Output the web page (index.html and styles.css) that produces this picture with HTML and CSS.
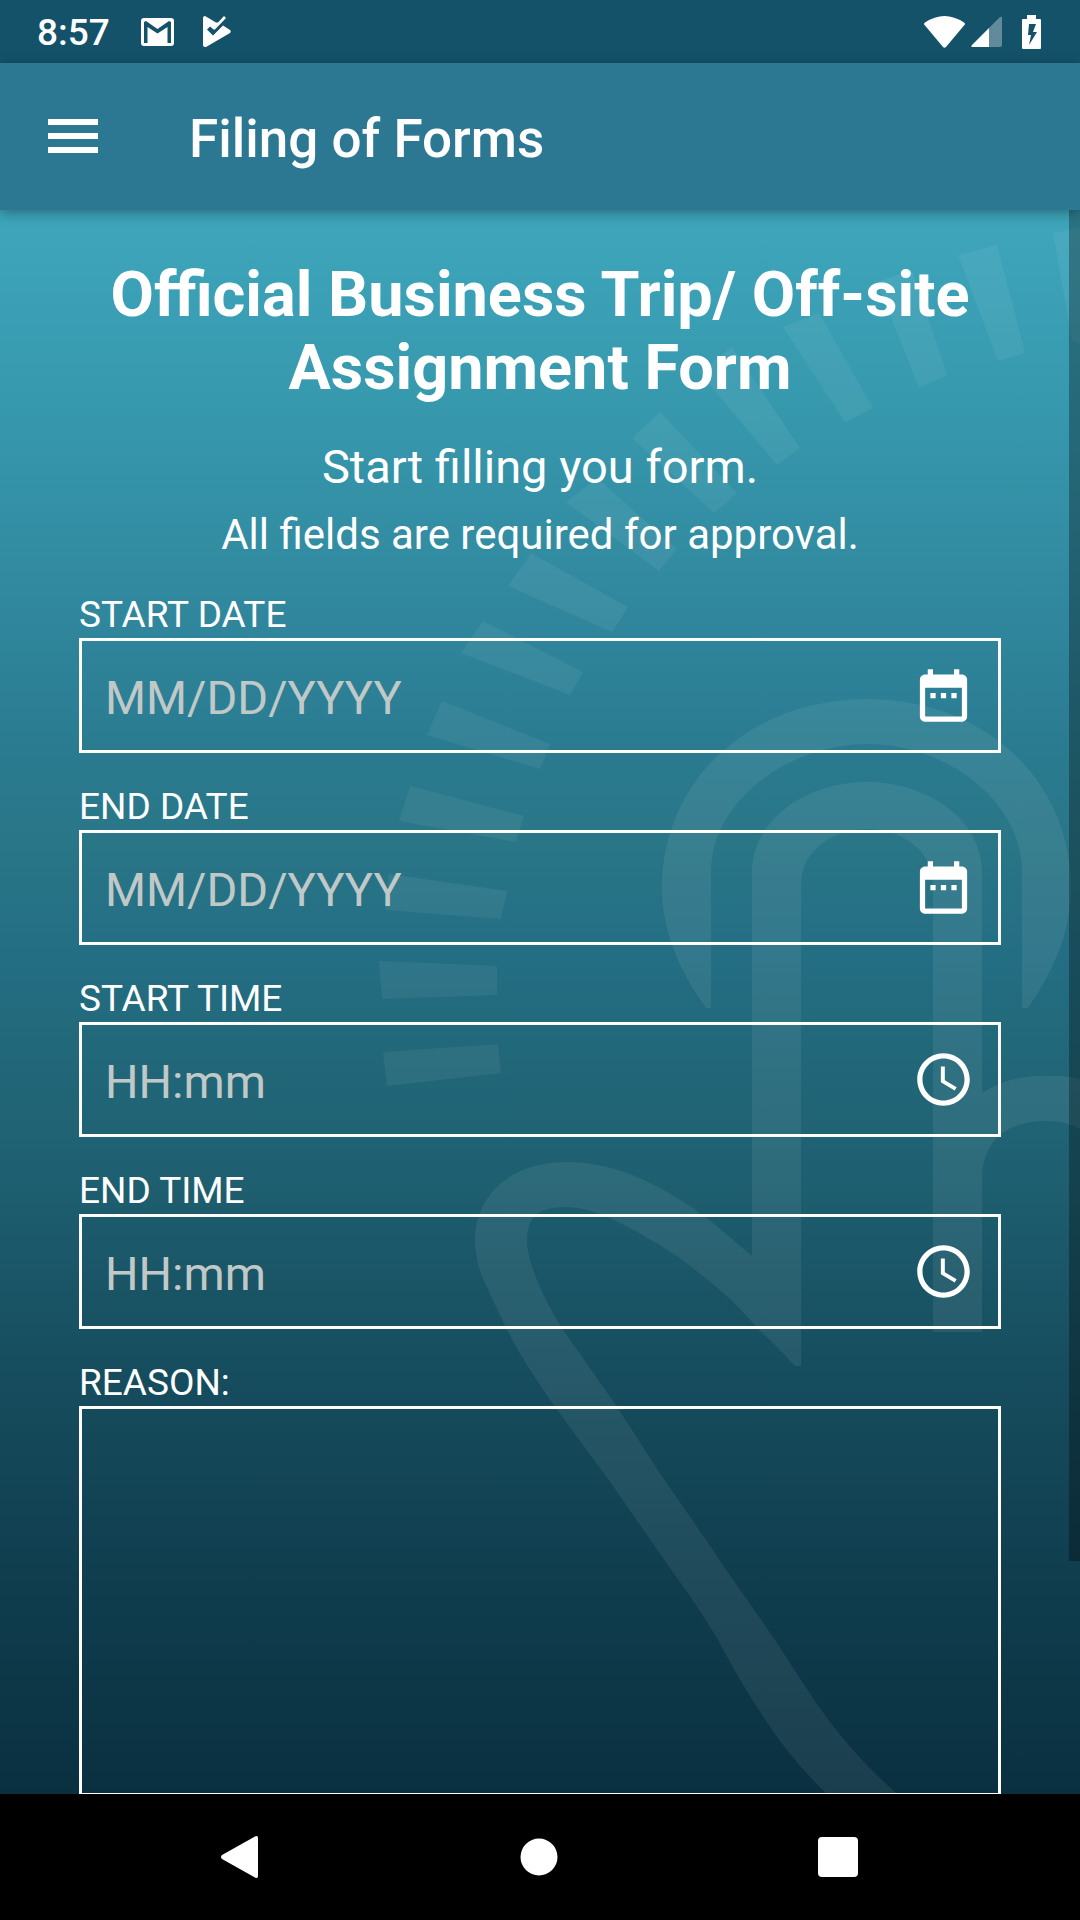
FILE: index.html
```html
<!DOCTYPE html>
<html lang="en">
<head>
<meta charset="utf-8">
<meta name="viewport" content="width=device-width, initial-scale=1">
<title>Filing of Forms</title>
<link rel="stylesheet" href="styles.css">
</head>
<body>
<div class="app">
  <div class="status">
    <span class="time">8:57</span>
    <svg class="mail" width="33" height="28" viewBox="0 0 33 28" aria-hidden="true">
      <path fill="#fff" fill-rule="evenodd" d="M3 0H30Q33 0 33 3V25Q33 28 30 28H3Q0 28 0 25V3Q0 0 3 0ZM3 4V25H6.500V9L16.500 15.500L26.500 9V25H30V4L28 3L16.500 11L5 3Z"/>
    </svg>
    <svg class="play" width="28" height="31" viewBox="0 0 28 31" aria-hidden="true">
      <path fill="#fff" d="M0 2Q0 0 2 0L13 6.500L15 6.500L21 0L23 2L12 13.500L10.500 13.500L7 10.500L4 13.500L10 19.500L20 9.500L27 14Q28.500 15.500 27 17L3 31Q0 31 0 29Z"/>
    </svg>
    <span class="spacer"></span>
    <svg class="wifi" width="41" height="32" viewBox="0 0 41 32" aria-hidden="true">
      <path fill="#fff" d="M1 9.500Q-1 8 1 6.500Q20.500-6.500 40 6.500Q42 8 40 9.500L22 31Q20.500 32.500 19 31Z"/>
    </svg>
    <svg class="signal" width="31" height="31" viewBox="0 0 31 31" aria-hidden="true">
      <path fill="#fff" fill-opacity=".33" d="M18 12L29 1Q31 0 31 2V29Q31 31 29 31H18Z"/>
      <path fill="#fff" d="M18 12V31H2Q-1 31 1 29Z"/>
    </svg>
    <svg class="battery" width="19" height="34" viewBox="0 0 19 34" aria-hidden="true">
      <path fill="#fff" fill-rule="evenodd" d="M5 0H14V4H18Q19 4 19 5V33Q19 34 18 34H1Q0 34 0 33V5Q0 4 1 4H5ZM7 9L6 20H9L7 30L15 17H11L14 9Z"/>
    </svg>
  </div>

  <header class="bar">
    <button class="menu" type="button" aria-label="Menu">
      <svg width="50" height="34" viewBox="0 0 50 34" aria-hidden="true"><path fill="#fff" d="M0 0H50V6H0ZM0 14H50V20H0ZM0 28H50V34H0Z"/></svg>
    </button>
    <span class="title">Filing of Forms</span>
  </header>

  <div class="stage">
    <svg class="emblem" viewBox="0 210 1080 1584" preserveAspectRatio="xMaxYMin slice" aria-hidden="true">
      <path d="M711 1008H706C675 965 662 925 662 888C662 780 750 699 867 699C984 699 1071 780 1071 888C1071 925 1058 965 1028 1008H1022V872C1022 800 945 744 868 744C790 744 711 800 711 872Z"/>
      <path d="M752 1256V872C752 820 806 782 867 782C928 782 982 820 982 872V1093Q1008 1076 1040 1076Q1062 1075 1080 1079V1129Q1066 1120 1040 1121Q983 1126 982 1178V1332H933V884C933 850 900 829 868 829C834 829 801 850 801 884V1366H795Q775 1344 759 1330Q740 1308 727 1296Q700 1273 677 1256Q640 1232 610 1218Q585 1207 567 1207C538 1207 526 1217 527 1244Q529 1264 544 1296Q552 1312 563 1330Q588 1365 615 1404Q636 1436 661 1475Q696 1525 727 1571L775 1640Q796 1673 819 1707Q852 1754 897 1794H827Q791 1760 764 1718Q742 1685 718 1640Q698 1606 672 1571L608 1479L553 1404Q526 1366 507 1330L483 1279Q475 1260 475 1240C475 1196 510 1162 566 1162Q610 1162 654 1185Q680 1198 707 1218Z"/>
      <path class="rays" d="M1053 233L1080 228V344L1072 340ZM958 255L997 245L1025 353L998 361ZM877 282L912 270L947 375L919 388ZM783 327L819 313L873 408L845 422ZM699 372L732 347L800 448L777 465ZM632 438L660 412L737 493L714 513ZM566 502L597 478L677 549L659 571ZM531 553L628 607L612 632L508 586ZM483 621L583 672L570 695L461 653ZM442 701L550 744L540 769L427 735ZM410 786L524 816L516 842L399 821ZM389 874L507 891L501 919L385 910ZM379 961L497 966V995L382 999ZM383 1052L498 1044L501 1073L387 1086Z"/>
    </svg>

    <main class="scroll">
      <h1>Official Business Trip/ Off-site Assignment Form</h1>
      <p class="lead">Start filling you form.</p>
      <p class="note">All fields are required for approval.</p>

      <form class="form">
        <div class="field">
          <label for="start-date">START DATE</label>
          <div class="box">
            <input id="start-date" type="text" placeholder="MM/DD/YYYY">
            <button type="button" aria-label="Pick start date"><svg viewBox="0 0 24 24" aria-hidden="true"><path d="M9 11H7v2h2v-2zm4 0h-2v2h2v-2zm4 0h-2v2h2v-2zm2-7h-1V2h-2v2H8V2H6v2H5c-1.110 0-1.990.9-1.990 2L3 20c0 1.100.890 2 2 2h14c1.100 0 2-.9 2-2V6c0-1.100-.9-2-2-2zm0 16H5V9h14v11z"/></svg></button>
          </div>
        </div>
        <div class="field">
          <label for="end-date">END DATE</label>
          <div class="box">
            <input id="end-date" type="text" placeholder="MM/DD/YYYY">
            <button type="button" aria-label="Pick end date"><svg viewBox="0 0 24 24" aria-hidden="true"><path d="M9 11H7v2h2v-2zm4 0h-2v2h2v-2zm4 0h-2v2h2v-2zm2-7h-1V2h-2v2H8V2H6v2H5c-1.110 0-1.990.9-1.990 2L3 20c0 1.100.890 2 2 2h14c1.100 0 2-.9 2-2V6c0-1.100-.9-2-2-2zm0 16H5V9h14v11z"/></svg></button>
          </div>
        </div>
        <div class="field">
          <label for="start-time">START TIME</label>
          <div class="box">
            <input id="start-time" type="text" placeholder="HH:mm">
            <button type="button" aria-label="Pick start time"><svg viewBox="0 0 24 24" aria-hidden="true"><path d="M11.990 2C6.470 2 2 6.480 2 12s4.470 10 9.990 10C17.520 22 22 17.520 22 12S17.520 2 11.990 2zM12 20c-4.420 0-8-3.580-8-8s3.580-8 8-8 8 3.580 8 8-3.580 8-8 8zm.5-13H11v6l5.250 3.150.750-1.230-4.500-2.670z"/></svg></button>
          </div>
        </div>
        <div class="field">
          <label for="end-time">END TIME</label>
          <div class="box">
            <input id="end-time" type="text" placeholder="HH:mm">
            <button type="button" aria-label="Pick end time"><svg viewBox="0 0 24 24" aria-hidden="true"><path d="M11.990 2C6.470 2 2 6.480 2 12s4.470 10 9.990 10C17.520 22 22 17.520 22 12S17.520 2 11.990 2zM12 20c-4.420 0-8-3.580-8-8s3.580-8 8-8 8 3.580 8 8-3.580 8-8 8zm.5-13H11v6l5.250 3.150.750-1.230-4.500-2.670z"/></svg></button>
          </div>
        </div>
        <div class="field">
          <label for="reason">REASON:</label>
          <textarea id="reason"></textarea>
        </div>
      </form>
    </main>
    <div class="thumb"></div>
  </div>

  <nav class="nav">
    <button type="button" aria-label="Back"><svg width="38" height="42" viewBox="0 0 38 42" aria-hidden="true"><path d="M1 19L34 .500Q37-1 37 2V40Q37 43 34 41.500L1 23Q-1 21 1 19Z"/></svg></button>
    <button type="button" aria-label="Home"><svg width="38" height="38" viewBox="0 0 38 38" aria-hidden="true"><circle cx="19" cy="19" r="18.500"/></svg></button>
    <button type="button" aria-label="Recent apps"><svg width="40" height="40" viewBox="0 0 40 40" aria-hidden="true"><rect width="40" height="40" rx="4"/></svg></button>
  </nav>
</div>
</body>
</html>
```

FILE: styles.css
```css
* {
  box-sizing: border-box;
}

body {
  margin: 0;
  background: #000;
  color: #fff;
  font-family: Roboto, "Noto Sans", sans-serif;
}

button {
  border: 0;
  padding: 0;
  background: none;
  display: flex;
  align-items: center;
  justify-content: center;
}

svg {
  display: block;
  fill: #fff;
}

.app {
  height: 100vh;
  display: flex;
  flex-direction: column;
}

/* System status bar */
.status {
  flex: none;
  height: 63px;
  padding: 0 39px 0 37px;
  display: flex;
  align-items: center;
  background: #14526a;
}

.time {
  font-size: 37px;
  line-height: 44px;
  font-weight: 500;
  padding-top: 3px;
}

.mail {
  margin-left: 31px;
}

.play {
  margin-left: 29px;
}

.spacer {
  flex: 1;
}

.wifi {
  margin-right: 6px;
}

.signal {
  margin-right: 20px;
}

/* App bar */
.bar {
  position: relative;
  z-index: 1;
  flex: none;
  height: 147px;
  padding-left: 48px;
  display: flex;
  align-items: center;
  gap: 91px;
  background: #2c7893;
  box-shadow: 0 3px 12px rgba(0, 0, 0, 0.35);
}

.menu {
  padding-bottom: 2px;
}

.title {
  padding-top: 5px;
  font-size: 53px;
  line-height: 60px;
  font-weight: 500;
}

/* Scrolling form area */
.stage {
  position: relative;
  flex: 1;
  min-height: 0;
  overflow: hidden;
  background: linear-gradient(#3ea6bc 0%, #3799ae 12%, #31899f 24%, #2a7b90 34%, #297687 40%, #246e84 47%, #226a7c 51%, #1f6273 59%, #174f60 72%, #103f50 85%, #0a3040 100%);
}

.emblem {
  position: absolute;
  inset: 0;
  width: 100%;
  height: 100%;
  fill: rgba(255, 255, 255, 0.07);
}

.rays {
  fill: rgba(255, 255, 255, 0.06);
}

.scroll {
  position: relative;
  height: 100%;
  padding: 48px 79px 271px;
  overflow-y: auto;
  scrollbar-width: none;
  text-align: center;
}

h1,
p {
  margin: 0;
}

h1 {
  font-size: 63px;
  line-height: 73px;
  font-weight: 700;
}

.lead {
  margin-top: 35px;
  font-size: 47px;
  line-height: 55px;
}

.note {
  margin-top: 16px;
  font-size: 42px;
  line-height: 49px;
}

.form {
  margin-top: 35px;
  display: flex;
  flex-direction: column;
  gap: 33px;
  text-align: left;
}

.field {
  display: flex;
  flex-direction: column;
}

.field label {
  padding-bottom: 2px;
  font-size: 37px;
  line-height: 42px;
}

.box {
  height: 115px;
  padding-right: 23px;
  display: flex;
  align-items: center;
  border: 3px solid #fff;
}

.box input {
  flex: 1;
  min-width: 0;
  height: 100%;
  padding: 3px 23px 0;
  border: 0;
  background: none;
  color: #fff;
  font: 47px/55px Roboto, "Noto Sans", sans-serif;
}

.box input::placeholder {
  color: #c1c9c8;
  opacity: 1;
}

.box svg {
  width: 63px;
  height: 63px;
}

textarea {
  display: block;
  height: 390px;
  padding: 22px;
  border: 3px solid #fff;
  border-radius: 0;
  background: none;
  color: #fff;
  font: 47px/55px Roboto, "Noto Sans", sans-serif;
  resize: none;
}

.thumb {
  position: absolute;
  top: 0;
  right: 0;
  width: 11px;
  height: 1351px;
  background: rgba(0, 0, 0, 0.3);
}

/* System navigation bar */
.nav {
  flex: none;
  height: 126px;
  padding: 0 92px 0 90px;
  display: grid;
  grid-template-columns: repeat(3, 1fr);
  background: #000;
}
```
